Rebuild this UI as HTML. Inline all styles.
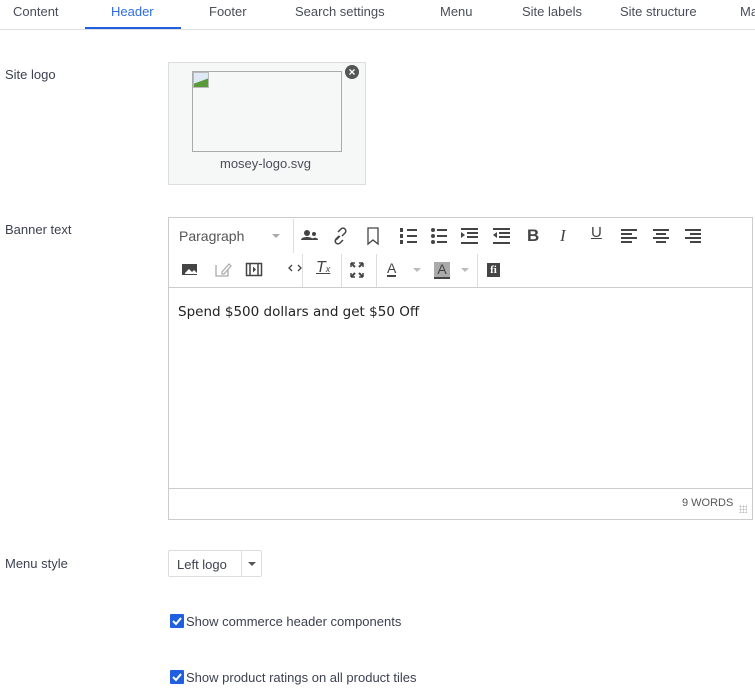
<!DOCTYPE html>
<html><head><style>
body{margin:0;width:755px;height:692px;background:#fff;font-family:"Liberation Sans",sans-serif;color:#3d4150;position:relative;overflow:hidden;font-size:13px}
.a{position:absolute;white-space:nowrap}
.tab{position:absolute;top:4px;font-size:13px;color:#4a4d5a}
.sep{position:absolute;width:1px;background:#ddd}
</style></head><body>
<div class="tab" style="left:13px">Content</div>
<div class="tab" style="left:111px;color:#2f6de1">Header</div>
<div class="tab" style="left:209px">Footer</div>
<div class="tab" style="left:295px">Search settings</div>
<div class="tab" style="left:440px">Menu</div>
<div class="tab" style="left:522px">Site labels</div>
<div class="tab" style="left:620px">Site structure</div>
<div class="tab" style="left:740px">Ma</div>
<div class="a" style="left:0;top:29px;width:755px;height:1px;background:#ddd"></div>
<div class="a" style="left:85px;top:27px;width:96px;height:2px;background:#1f5fe0"></div>

<div class="a" style="left:5px;top:67px">Site logo</div>
<div class="a" style="left:5px;top:222px">Banner text</div>
<div class="a" style="left:5px;top:556px">Menu style</div>

<div class="a" style="left:168px;top:62px;width:196px;height:121px;background:#f6f7f7;border:1px solid #ddd"></div>
<div class="a" style="left:192px;top:71px;width:148px;height:79px;border:1px solid #aaa"></div>
<div class="a" style="left:193px;top:72px;width:14px;height:14px;border:1px solid #bbb;background:linear-gradient(160deg,#dfe9f5 55%,#5a9a3a 56%)"></div>
<div class="a" style="left:220px;top:156px;color:#4a4d5a">mosey-logo.svg</div>
<div class="a" style="left:345px;top:65px;width:14px;height:14px;border-radius:50%;background:#555;color:#fff;font-size:12px;line-height:14px;text-align:center;font-weight:bold">×</div>

<div class="a" style="left:168px;top:217px;width:583px;height:301px;border:1px solid #ccc"></div>
<div class="a" style="left:169px;top:287px;width:583px;height:1px;background:#ccc"></div>
<div class="a" style="left:169px;top:488px;width:583px;height:1px;background:#ccc"></div>
<div class="a" style="left:179px;top:228px;font-size:14px;color:#555">Paragraph</div>
<div class="a" style="left:272px;top:234px;border:4px solid transparent;border-top:4px solid #aaa"></div>
<div class="sep" style="left:293px;top:219px;height:34px"></div>
<svg class="a" style="left:170px;top:218px" width="580" height="70" fill="#444" stroke="#444">
<g stroke="none"><circle cx="137" cy="15" r="3"/><path d="M131 22c0-4 12-4 12 0z"/><circle cx="144" cy="16" r="2"/><path d="M141 22c1-3 7-3 7 0z"/></g>
<path d="M166 22l4-4M168 14l3-3a2 2 0 0 1 4 4l-3 3M173 22l-3 3a2 2 0 0 1-4-4l3-3" fill="none" stroke-width="1.5"/>
<path d="M198 10h10v16l-5-4-5 4z" fill="none" stroke-width="1.3"/>
<g stroke="none"><rect x="237" y="11" width="10" height="2"/><rect x="237" y="17" width="10" height="2"/><rect x="237" y="23" width="10" height="2"/><rect x="230" y="10" width="3" height="4"/><rect x="230" y="16" width="3" height="4"/><rect x="230" y="22" width="3" height="4"/>
<circle cx="263" cy="12" r="2"/><circle cx="263" cy="18" r="2"/><circle cx="263" cy="24" r="2"/><rect x="267" y="11" width="10" height="2"/><rect x="267" y="17" width="10" height="2"/><rect x="267" y="23" width="10" height="2"/>
<rect x="291" y="10" width="17" height="2"/><rect x="297" y="14" width="11" height="2"/><rect x="297" y="18" width="11" height="2"/><rect x="291" y="24" width="17" height="2"/><path d="M291 14l4 3-4 3z"/>
<rect x="323" y="10" width="17" height="2"/><rect x="329" y="14" width="11" height="2"/><rect x="329" y="18" width="11" height="2"/><rect x="323" y="24" width="17" height="2"/><path d="M327 14l-4 3 4 3z"/>
<rect x="451" y="11" width="16" height="2"/><rect x="451" y="15" width="11" height="2"/><rect x="451" y="19" width="16" height="2"/><rect x="451" y="23" width="11" height="2"/>
<rect x="483" y="11" width="16" height="2"/><rect x="486" y="15" width="10" height="2"/><rect x="483" y="19" width="16" height="2"/><rect x="486" y="23" width="10" height="2"/>
<rect x="515" y="11" width="16" height="2"/><rect x="520" y="15" width="11" height="2"/><rect x="515" y="19" width="16" height="2"/><rect x="520" y="23" width="11" height="2"/>
<rect x="12" y="46" width="15" height="11"/>
</g>
<path d="M15 55l4-4 3 3 2-2 3 3v1H15z" fill="#fff" stroke="none"/>
<path d="M46 47v11h12v-6" fill="none" stroke="#aaa" stroke-width="1.3"/>
<path d="M52 54l7-8 2 2-7 8h-2z" fill="none" stroke="#aaa" stroke-width="1.2"/>
<rect x="76.5" y="45.5" width="15" height="12" fill="none" stroke-width="1.5"/>
<path d="M80 46v11M88 46v11" stroke-width="1.5"/>
<path d="M83 48.5l3 3-3 3z" stroke="none"/>
<path d="M122 47l-3 3 3 3M128 47l3 3-3 3" fill="none" stroke-width="1.3"/>
<path d="M181 45l4 4M193 45l-4 4M181 59l4-4M193 59l-4-4" stroke-width="2"/>
<path d="M181 45h4M181 45v4M193 45h-4M193 45v4M181 59h4M181 59v-4M193 59h-4M193 59v-4" stroke-width="1.5"/>
</svg>
<div class="a" style="left:527px;top:226px;font-size:17px;font-weight:bold;color:#444">B</div>
<div class="a" style="left:560px;top:226px;font-size:17px;font-style:italic;color:#444;font-family:'Liberation Serif',serif">I</div>
<div class="a" style="left:591px;top:224px;font-size:15px;text-decoration:underline;color:#444">U</div>
<div class="sep" style="left:302px;top:254px;height:33px"></div>
<div class="a" style="left:316px;top:259px;font-size:16px;font-style:italic;color:#444;text-decoration:underline">T<span style="font-size:9px">x</span></div>
<div class="sep" style="left:341px;top:254px;height:33px"></div>
<div class="sep" style="left:376px;top:254px;height:33px"></div>
<div class="a" style="left:387px;top:261px;font-size:14px;color:#444;border-bottom:2px solid #444;line-height:14px">A</div>
<div class="a" style="left:413px;top:268px;border:4px solid transparent;border-top:4px solid #bbb"></div>
<div class="a" style="left:434px;top:262px;width:16px;height:15px;background:#aaa;font-size:14px;color:#444;text-align:center;line-height:15px;border-bottom:2px solid #444">A</div>
<div class="a" style="left:461px;top:268px;border:4px solid transparent;border-top:4px solid #bbb"></div>
<div class="sep" style="left:477px;top:254px;height:33px"></div>
<div class="a" style="left:487px;top:263px;width:13px;height:14px;background:#444;color:#fff;font-size:11px;font-weight:bold;text-align:center;line-height:14px;font-family:'Liberation Serif',serif">fi</div>
<div class="a" style="left:178px;top:304px;font-family:'DejaVu Sans',sans-serif;font-size:13.5px;color:#222">Spend $500 dollars and get $50 Off</div>
<div class="a" style="left:682px;top:497px;font-size:11px;color:#555">9 WORDS</div>
<div class="a" style="left:739px;top:505px;width:8px;height:8px;background:radial-gradient(#bbb 1px,transparent 1px) 0 0/3px 3px"></div>

<div class="a" style="left:168px;top:550px;width:92px;height:25px;border:1px solid #ddd;border-radius:2px"></div>
<div class="a" style="left:241px;top:551px;width:1px;height:25px;background:#ddd"></div>
<div class="a" style="left:177px;top:557px;color:#3d4150">Left logo</div>
<div class="a" style="left:248px;top:562px;border:4px solid transparent;border-top:4px solid #555"></div>

<div class="a" style="left:170px;top:614px;width:14px;height:14px;background:#1f5fe0;border-radius:1px"></div>
<svg class="a" style="left:170px;top:614px" width="14" height="14"><path d="M3 7l3 3 5-6" stroke="#fff" stroke-width="2" fill="none"/></svg>
<div class="a" style="left:186px;top:614px">Show commerce header components</div>
<div class="a" style="left:170px;top:670px;width:14px;height:14px;background:#1f5fe0;border-radius:1px"></div>
<svg class="a" style="left:170px;top:670px" width="14" height="14"><path d="M3 7l3 3 5-6" stroke="#fff" stroke-width="2" fill="none"/></svg>
<div class="a" style="left:186px;top:670px">Show product ratings on all product tiles</div>
</body></html>
